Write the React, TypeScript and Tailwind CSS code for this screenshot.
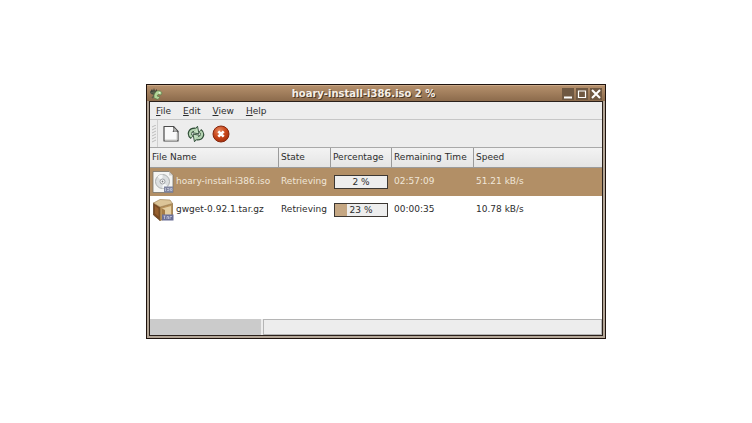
import type { ReactNode } from "react";

type Download = {
  name: string;
  kind: "iso" | "archive";
  state: string;
  percent: number;
  remaining: string;
  speed: string;
  selected: boolean;
};

const downloads: Download[] = [
  { name: "hoary-install-i386.iso", kind: "iso", state: "Retrieving", percent: 2, remaining: "02:57:09", speed: "51.21 kB/s", selected: true },
  { name: "gwget-0.92.1.tar.gz", kind: "archive", state: "Retrieving", percent: 23, remaining: "00:00:35", speed: "10.78 kB/s", selected: false },
];

const menus = ["File", "Edit", "View", "Help"];
const columns = ["File Name", "State", "Percentage", "Remaining Time", "Speed"];

function AppIcon() {
  return (
    <svg viewBox="0 0 14 14" className="h-3.5 w-3.5" aria-hidden="true">
      <path d="M1 5 L3 2 L4 4 L5 1 L6 4 L8 2 L8 6 L6 8 L2 7Z" fill="#3e4238" />
      <path d="M2 6 L5 5 L5 9 L3 11" stroke="#59604b" strokeWidth="1.5" fill="none" />
      <path d="M6 6 C7 3 12 3 13 6 L12 8 L9 7.500 L8 9 L11 10 L9 12.500 L5 11 L5 8Z" fill="#b4d699" stroke="#5c7a48" strokeWidth=".7" />
      <circle cx="10.500" cy="5.800" r=".8" fill="#f2f7e8" />
    </svg>
  );
}

function NewIcon() {
  return (
    <svg viewBox="0 0 18 18" className="h-[18px] w-[18px]" aria-hidden="true">
      <path d="M2 1.500 H11.500 L16 6.500 V16 H2Z" fill="#fafafa" stroke="#4b4b4b" strokeWidth="1.200" strokeLinejoin="round" />
      <path d="M11.500 1.500 C12.200 3.500 12 5 11 6.500 C13 6 14.500 6 16 6.500Z" fill="#d5d5d2" stroke="#4b4b4b" strokeWidth=".9" />
      <path d="M3 15 H15 V8" stroke="#cfcfcc" fill="none" />
    </svg>
  );
}

function ResumeIcon() {
  return (
    <svg viewBox="0 0 18 18" className="h-[18px] w-[18px]" fill="none" aria-hidden="true">
      <g stroke="#2d4b35" strokeWidth="4">
        <path d="M5 12.500 C1 9.500 2.500 4 8.500 4.500" />
        <path d="M13 5.500 C17 8.500 15.500 14 9.500 13.500" />
      </g>
      <g fill="#c3dfc0" stroke="#2d4b35" strokeWidth=".9" strokeLinejoin="round">
        <path d="M10.500 1.200 L12 8.800 L5.500 7.800Z" />
        <path d="M7.500 16.800 L6 9.200 L12.500 10.200Z" />
      </g>
      <g stroke="#b4d3b1" strokeWidth="2.200">
        <path d="M4.800 11.900 C1.600 9.500 2.600 4.300 9 4.800" />
        <path d="M13.200 6.100 C16.400 8.500 15.400 13.700 9 13.200" />
      </g>
    </svg>
  );
}

function StopIcon() {
  return (
    <svg viewBox="0 0 18 18" className="h-[18px] w-[18px]" aria-hidden="true">
      <defs>
        <radialGradient id="stop" cx=".4" cy=".3" r=".75">
          <stop offset="0" stopColor="#e58a62" />
          <stop offset=".5" stopColor="#cb4a1d" />
          <stop offset="1" stopColor="#a32c08" />
        </radialGradient>
      </defs>
      <circle cx="9" cy="9" r="8" fill="url(#stop)" stroke="#84280f" />
      <path d="M6.300 6.300 L11.700 11.700 M11.700 6.300 L6.300 11.700" stroke="#fff" strokeWidth="2.600" />
    </svg>
  );
}

function IsoIcon() {
  return (
    <svg viewBox="0 0 22 24" className="h-6 w-[22px] shrink-0" aria-hidden="true">
      <path d="M1 1.500 H17 L21 5.500 V22.500 H1Z" fill="#f5f5f3" stroke="#77736d" strokeWidth=".8" />
      <path d="M17 1.500 V5.500 H21Z" fill="#d0cfcc" />
      <circle cx="10.500" cy="11.500" r="7" fill="#dcdfe0" stroke="#a5a7a8" strokeWidth=".9" />
      <path d="M10.500 11.500 L5.500 6.700 A7 7 0 0 1 10.500 4.600Z M10.500 11.500 L15.500 16.300 A7 7 0 0 1 10.500 18.400Z" fill="#f6f8f8" />
      <circle cx="10.500" cy="11.500" r="2.500" fill="#f8f8f8" stroke="#898c90" strokeWidth=".8" />
      <circle cx="10.500" cy="11.500" r=".9" fill="#77797c" />
      <rect x="12" y="16.500" width="9" height="6" fill="#7f84a0" />
      <path d="M13.500 18 V21 M15 18.500 H17 V20.500 H15 M18.500 18.500 H20 V20.500 H18.500Z" stroke="#cbd0e0" strokeWidth=".7" fill="none" />
    </svg>
  );
}

function ArchiveIcon() {
  return (
    <svg viewBox="0 0 22 24" className="h-6 w-[22px] shrink-0" aria-hidden="true">
      <path d="M1.500 5 L8 9 V22.500 L1.500 17Z" fill="#7a4a22" stroke="#573718" strokeWidth=".7" />
      <path d="M8 9 L20.500 5.500 V18.500 L8 22.500Z" fill="#b8935c" stroke="#8a683a" strokeWidth=".7" />
      <path d="M1.500 5 L8 1.500 L18 2 L20.500 5.500 L8 9Z" fill="#dcc598" stroke="#a5865a" strokeWidth=".7" />
      <path d="M10 10.500 L19 8 V17.500 L10 20Z" fill="#e3cda0" />
      <path d="M10 10.500 L13 12 V18 L10 20Z" fill="#a47b46" />
      <path d="M3 8 L6.500 10.500 V18.500 L3 15.500Z" fill="#96602f" />
      <rect x="10" y="16.500" width="11.500" height="6" fill="#6b6f96" />
      <path d="M11.500 18 H13.500 M12.500 18 V21 M15 21 V18.500 H16.500 V21 M18 21 V18.500 H20" stroke="#d0d3e6" strokeWidth=".7" fill="none" />
    </svg>
  );
}

function TitleButton({ label, children }: { label: string; children: ReactNode }) {
  return (
    <button type="button" aria-label={label} className="flex h-3 w-3 items-center justify-center bg-[#6f5842]">
      <svg viewBox="0 0 12 12" className="h-3 w-3" stroke="#fff" fill="none" aria-hidden="true">
        {children}
      </svg>
    </button>
  );
}

function Progress({ percent }: { percent: number }) {
  return (
    <div
      role="progressbar"
      aria-valuenow={percent}
      aria-label="Percentage"
      className="relative h-3.5 w-[54px] border border-[#3d3833] bg-[#eeeeee] text-center leading-3 text-[#2c2c2c]"
    >
      <div className="absolute inset-y-0 left-0 bg-[#c5a783]" style={{ width: percent > 2 ? `${percent}%` : 0 }} />
      <span className="relative">{percent} %</span>
    </div>
  );
}

export default function App() {
  return (
    <main className="bg-white px-[146px] py-[84px] font-['DejaVu_Sans',sans-serif] text-[9px] text-[#2c2c2c]">
      <section className="border border-[#1f130e] bg-[#b3a697]">
        <header className="flex h-4 items-center border-t border-[#c9a887] bg-linear-to-b from-[#b48f6b] to-[#8c6b4c] pr-[3px] pl-0.5">
          <div className="w-4">
            <AppIcon />
          </div>
          <h1 className="flex-1 text-center text-[10px] leading-4 font-bold text-[#f5efe7] [text-shadow:1px_1px_0_#4d3825]">
            hoary-install-i386.iso 2 %
          </h1>
          <div className="flex w-10 justify-end gap-0.5">
            <TitleButton label="Minimize">
              <path d="M2 9.500 H10" strokeWidth="2" />
            </TitleButton>
            <TitleButton label="Maximize">
              <path d="M2.500 3 H9.500 V9.500 H2.500Z" strokeWidth="1.200" />
            </TitleButton>
            <TitleButton label="Close">
              <path d="M2 2 L10 10 M10 2 L2 10" strokeWidth="2" />
            </TitleButton>
          </div>
        </header>

        <div className="mx-0.5 mb-0.5 border border-[#2a201a] bg-[#ededed]">
          <nav className="flex h-[18px] items-center gap-3 border-b border-[#c6c6c6] px-1.5">
            {menus.map((menu) => (
              <button key={menu} type="button" className="leading-4">
                <span className="underline underline-offset-1">{menu[0]}</span>
                {menu.slice(1)}
              </button>
            ))}
          </nav>

          <div className="flex h-7 items-center border-b border-[#a9a9a9]">
            <div className="mr-1 flex h-full w-2 items-center justify-center border-r border-[#cfcfcf]">
              <svg viewBox="0 0 4 18" className="h-[18px] w-1" aria-hidden="true">
                <path d="M0 2 L4 0 M0 5 L4 3 M0 8 L4 6 M0 11 L4 9 M0 14 L4 12 M0 17 L4 15" stroke="#bcbcbc" />
              </svg>
            </div>
            <div className="flex gap-[7px]">
              <button type="button" aria-label="New download"><NewIcon /></button>
              <button type="button" aria-label="Resume"><ResumeIcon /></button>
              <button type="button" aria-label="Cancel"><StopIcon /></button>
            </div>
          </div>

          <div className="min-h-[171px] bg-white">
            <table className="w-full table-fixed border-separate border-spacing-0 text-left">
              <colgroup>
                <col className="w-[129px]" />
                <col className="w-[52px]" />
                <col className="w-[61px]" />
                <col className="w-[82px]" />
                <col />
              </colgroup>
              <thead>
                <tr className="h-5 bg-linear-to-b from-[#f3f3f3] to-[#e4e4e4]">
                  {columns.map((column) => (
                    <th key={column} scope="col" className="border-r border-b border-[#9b9b9b] p-0 pl-0.5 font-normal whitespace-nowrap last:border-r-0">
                      {column}
                    </th>
                  ))}
                </tr>
              </thead>
              <tbody>
                {downloads.map((item) => (
                  <tr key={item.name} className={item.selected ? "h-7 bg-[#b28f66] text-[#f0e6d8]" : "h-7"}>
                    <td className="p-0 pl-0.5">
                      <div className="flex items-center gap-0.5 whitespace-nowrap">
                        {item.kind === "iso" ? <IsoIcon /> : <ArchiveIcon />}
                        {item.name}
                      </div>
                    </td>
                    <td className="p-0 pl-0.5">{item.state}</td>
                    <td className="p-0 pl-[3px]"><Progress percent={item.percent} /></td>
                    <td className="p-0 pl-0.5">{item.remaining}</td>
                    <td className="p-0 pl-0.5">{item.speed}</td>
                  </tr>
                ))}
              </tbody>
            </table>
          </div>

          <footer className="flex h-4 gap-0.5">
            <div className="w-[111px] bg-[#cbcbcb]" />
            <div className="flex-1 border border-[#b5b5b5] bg-[#ededed]" />
          </footer>
        </div>
      </section>
    </main>
  );
}
